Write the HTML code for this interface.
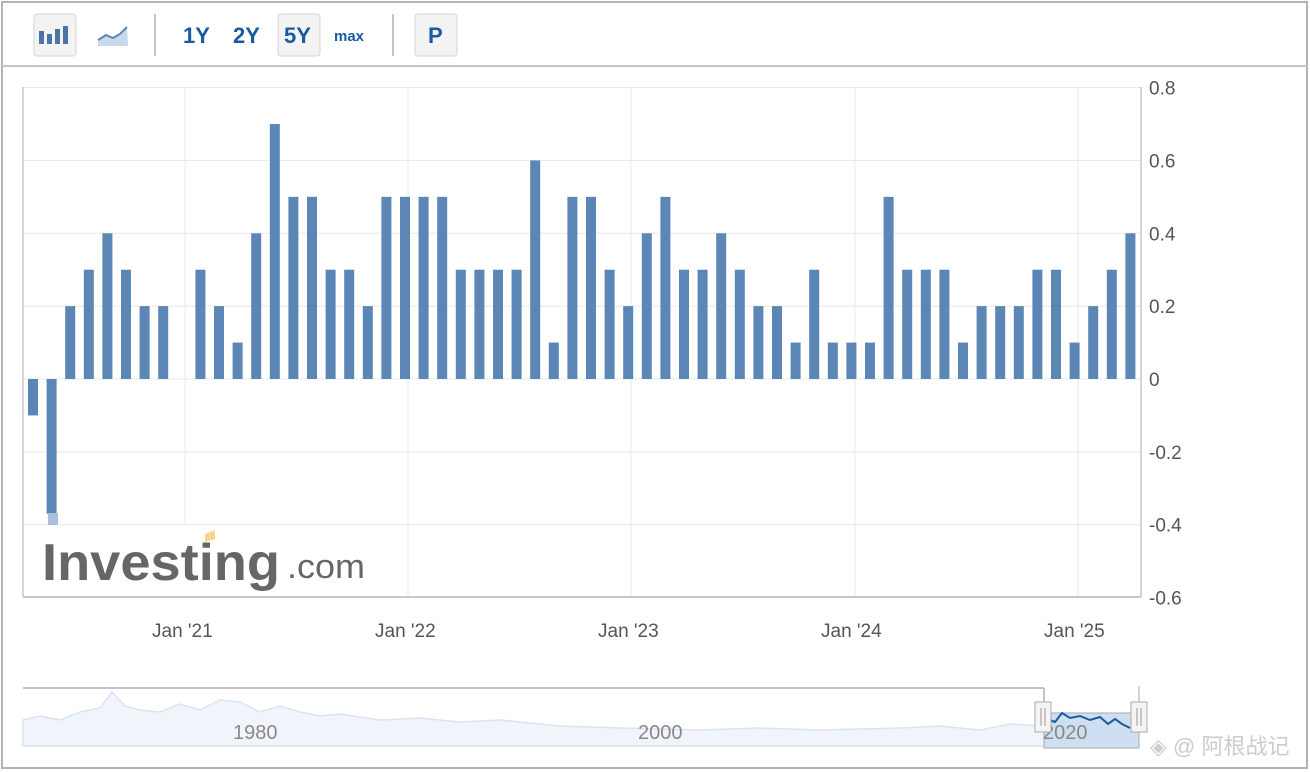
<!DOCTYPE html>
<html><head><meta charset="utf-8"><style>
html,body{margin:0;padding:0;background:#fff;width:1310px;height:772px;overflow:hidden;font-family:"Liberation Sans",Arial,sans-serif}
</style></head><body>
<svg id="s" width="1310" height="772" xmlns="http://www.w3.org/2000/svg" font-family="Liberation Sans, Arial, sans-serif">
<rect x="2" y="2" width="1305" height="766" fill="#fff" stroke="#b3b3b3" stroke-width="2"/>
<line x1="2" y1="66" x2="1307" y2="66" stroke="#c4c4c4" stroke-width="2"/>
<rect x="34" y="14" width="42" height="42" rx="3" fill="#f3f3f3" stroke="#d6d6d6"/>
<g fill="#4a74a8"><rect x="39" y="31" width="5" height="13"/><rect x="47" y="34" width="5" height="10"/><rect x="55" y="29" width="5" height="15"/><rect x="63" y="26" width="5" height="18"/></g>
<path d="M98 46 L98 40 L106 35 L113 38 L120 34 L127 27 L128 46 Z" fill="#c9d8ea"/>
<path d="M98 40 L106 35 L113 38 L120 34 L127 27" fill="none" stroke="#5b86b5" stroke-width="2"/>
<line x1="155" y1="14" x2="155" y2="56" stroke="#c4c4c4" stroke-width="2"/>
<g fill="#1a5aa0" font-weight="bold" font-size="22">
<text x="183" y="43">1Y</text><text x="233" y="43">2Y</text></g>
<rect x="278" y="14" width="42" height="42" rx="3" fill="#f3f3f3" stroke="#d6d6d6"/>
<text x="284" y="43" fill="#1a5aa0" font-weight="bold" font-size="22">5Y</text>
<text x="334" y="41" fill="#1a5aa0" font-weight="bold" font-size="15">max</text>
<line x1="393" y1="14" x2="393" y2="56" stroke="#c4c4c4" stroke-width="2"/>
<rect x="415" y="14" width="42" height="42" rx="3" fill="#f3f3f3" stroke="#d6d6d6"/>
<text x="428" y="43" fill="#1a5aa0" font-weight="bold" font-size="22">P</text>
<g id="grid" stroke="#e8e8e8" stroke-width="1"></g>
<g id="bars" fill="#5b86b5"></g>
<line x1="23" y1="87" x2="23" y2="597" stroke="#aaa"/>
<line x1="1141" y1="87" x2="1141" y2="597" stroke="#aaa"/>
<line x1="23" y1="597" x2="1141" y2="597" stroke="#c0cad8" stroke-width="2"/>
<rect x="48" y="513" width="10" height="12" fill="#a9c0dc"/>
<rect x="24" y="525" width="360" height="71" fill="#fff" opacity="0.9"/>
<text x="42" y="580" font-size="52" font-weight="bold" fill="#666" textLength="238" lengthAdjust="spacingAndGlyphs">Investing</text>
<text x="287" y="578" font-size="34" fill="#666" textLength="78" lengthAdjust="spacingAndGlyphs">.com</text>
<path d="M205 534 L215 530 L215 539 L205 542 Z" fill="#f9d48a"/>
<g id="ylab" fill="#555" font-size="19"></g>
<g fill="#555" font-size="19">
<text x="152" y="637">Jan '21</text><text x="375" y="637">Jan '22</text><text x="598" y="637">Jan '23</text><text x="821" y="637">Jan '24</text><text x="1044" y="637">Jan '25</text></g>
<rect x="23" y="688" width="1117" height="58" fill="#fff"/>
<path d="M23 688 H1044 M1044 688 V746" stroke="#b0b0b0" stroke-width="1.5" fill="none"/>
<path d="M23 746 L23 720 L40 716 L60 720 L80 712 L100 708 L112 692 L125 706 L140 710 L160 712 L180 704 L200 710 L220 700 L240 702 L260 712 L280 706 L300 712 L320 716 L340 714 L380 720 L420 718 L460 722 L500 720 L560 726 L620 728 L700 730 L760 728 L820 730 L900 728 L940 726 L980 730 L1010 724 L1044 726 L1044 746 Z" fill="#f1f5fb" stroke="#d9e4f1" stroke-width="1.5"/>
<rect x="1044" y="713" width="95" height="35" fill="#cfdff2" stroke="#aaa"/>
<path d="M1044 718 L1055 722 L1062 713 L1070 718 L1080 716 L1090 720 L1100 717 L1108 724 L1115 719 L1122 724 L1130 728" fill="none" stroke="#1a5aa0" stroke-width="2"/>
<g fill="#888" font-size="20"><text x="233" y="739">1980</text><text x="638" y="739">2000</text><text x="1043" y="739">2020</text></g>
<line x1="1139" y1="686" x2="1139" y2="748" stroke="#aaa"/>
<rect x="1035" y="702" width="16" height="30" fill="#f4f4f4" stroke="#aaa"/>
<path d="M1041 708 V726 M1045 708 V726" stroke="#999"/>
<rect x="1131" y="702" width="16" height="30" fill="#f4f4f4" stroke="#aaa"/>
<path d="M1137 708 V726 M1141 708 V726" stroke="#999"/>
<text x="1150" y="754" font-size="22" fill="#ccc" font-family="Liberation Sans, Noto Sans CJK SC, sans-serif">◈ @ 阿根战记</text>
</svg>
<script>
var ns="http://www.w3.org/2000/svg";
function y(v){return 379-v*364.3;}
var g=document.getElementById('grid');
function ln(a,b,c,d){var l=document.createElementNS(ns,'line');l.setAttribute('x1',a);l.setAttribute('y1',b);l.setAttribute('x2',c);l.setAttribute('y2',d);g.appendChild(l);}
var yl=document.getElementById('ylab');
for(var v=-6;v<=8;v+=2){var yy=y(v/10);ln(23,yy,1141,yy);var t=document.createElementNS(ns,'text');t.setAttribute('x',1149);t.setAttribute('y',yy+7);t.textContent=(v==0?'0':(v/10).toString());yl.appendChild(t);}
[185,408,631,855,1078].forEach(function(x){ln(x,87,x,597);});
var vals=[-0.1,-0.37,0.2,0.3,0.4,0.3,0.2,0.2,0,0.3,0.2,0.1,0.4,0.7,0.5,0.5,0.3,0.3,0.2,0.5,0.5,0.5,0.5,0.3,0.3,0.3,0.3,0.6,0.1,0.5,0.5,0.3,0.2,0.4,0.5,0.3,0.3,0.4,0.3,0.2,0.2,0.1,0.3,0.1,0.1,0.1,0.5,0.3,0.3,0.3,0.1,0.2,0.2,0.2,0.3,0.3,0.1,0.2,0.3,0.4];
var b=document.getElementById('bars');
vals.forEach(function(v,i){if(v==0)return;var r=document.createElementNS(ns,'rect');var x=28+i*18.6;var a=y(v),c=379;r.setAttribute('x',x);r.setAttribute('width',10);r.setAttribute('y',Math.min(a,c));r.setAttribute('height',Math.abs(a-c));b.appendChild(r);});
</script>
</body></html>
